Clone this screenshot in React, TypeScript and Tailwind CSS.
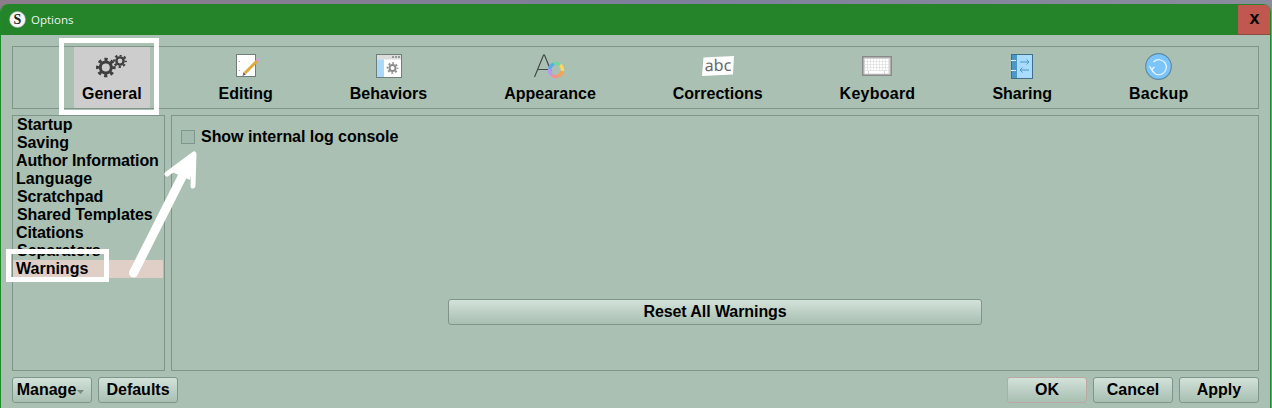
import React from "react";

const FONT = "[font-family:'Liberation_Sans',Arial,sans-serif]";

function Gear({ cx, cy, r, sw, tw, color }: { cx: number; cy: number; r: number; sw: number; tw: number; color: string }) {
  const outer = r + sw / 2 + 1;
  const c = 2 * Math.PI * outer;
  const dash = c / 8 / 2;
  return (
    <g fill="none" stroke={color}>
      <circle cx={cx} cy={cy} r={r} strokeWidth={sw} />
      <circle cx={cx} cy={cy} r={outer} strokeWidth={tw} strokeDasharray={`${dash} ${dash}`} strokeDashoffset={dash / 2} />
    </g>
  );
}

const GearsIcon = () => (
  <svg width="31" height="23" viewBox="0 0 31 23">
    <Gear cx={9.8} cy={12.5} r={5.5} sw={3} tw={3.6} color="#3f3f3f" />
    <Gear cx={24} cy={6} r={3.6} sw={2.4} tw={2.2} color="#3f3f3f" />
  </svg>
);

const EditingIcon = () => (
  <svg width="28" height="26" viewBox="0 0 28 26">
    <rect x="4.5" y="1.5" width="19" height="22" fill="#fff" stroke="#6f7f78" strokeWidth="1" />
    <rect x="7" y="8" width="1" height="1" fill="#aaa" />
    <rect x="7" y="17" width="1" height="1" fill="#aaa" />
    <line x1="13" y1="20" x2="25" y2="8" stroke="#e0a93a" strokeWidth="3" />
    <line x1="25" y1="8" x2="27" y2="6" stroke="#e39ad8" strokeWidth="3" />
    <path d="M10.5 23 L11.5 19 L14 21.5 Z" fill="#666" />
  </svg>
);

const BehaviorsIcon = () => (
  <svg width="26" height="24" viewBox="0 0 26 24">
    <rect x="0.5" y="0.5" width="25" height="23" fill="#fff" stroke="#6f7f78" />
    <rect x="1" y="1" width="24" height="4.5" fill="#dcdcdc" />
    <rect x="1" y="5.5" width="7" height="17.5" fill="#a9d8fb" />
    <rect x="16" y="2" width="2" height="2" fill="#999" />
    <rect x="19" y="2" width="2" height="2" fill="#999" />
    <rect x="22" y="2" width="2" height="2" fill="#999" />
    <Gear cx={16.5} cy={14} r={3} sw={2} tw={1.6} color="#8c8c8c" />
  </svg>
);

const ringColors = ["#6fd8a0", "#ffd75a", "#f6a24e", "#f58f8f", "#b49af5", "#5aa9f0"];
const ringArc = (i: number) => {
  const a0 = ((-110 + i * 60) * Math.PI) / 180;
  const a1 = ((-110 + (i + 1) * 60) * Math.PI) / 180;
  const p = (a: number) => `${22 + 6.5 * Math.cos(a)} ${16 + 6.5 * Math.sin(a)}`;
  return `M${p(a0)} A6.5 6.5 0 0 1 ${p(a1)}`;
};

const AppearanceIcon = () => (
  <svg width="32" height="24" viewBox="0 0 32 24">
    <path d="M0.5 23 L9.5 1 L10.5 1 L17 17" fill="none" stroke="#3f4a45" strokeWidth="1.2" />
    <line x1="4" y1="15.5" x2="15" y2="15.5" stroke="#3f4a45" strokeWidth="1.2" />
    <g fill="none" strokeWidth="3.2">
      {ringColors.map((c, i) => (
        <path key={c} d={ringArc(i)} stroke={c} />
      ))}
    </g>
  </svg>
);

const CorrectionsIcon = () => (
  <svg width="32" height="20" viewBox="0 0 32 20" className="overflow-visible">
    <polygon points="1.5,1.5 32,0 31,18.5 0,20" fill="#fff" />
    <text x="16" y="15" textAnchor="middle" fontSize="16" fill="#666" fontFamily="'Noto Sans',sans-serif" transform="rotate(-1 16 10)">abc</text>
  </svg>
);

const KeyboardIcon = () => (
  <svg width="30" height="20" viewBox="0 0 30 20">
    <rect x="0.75" y="0.75" width="28.5" height="18.5" fill="#d4d4d4" stroke="#8a8a8a" strokeWidth="1.5" />
    {[3, 6, 9, 12].map((y) =>
      [3, 6, 9, 12, 15, 18, 21, 24].map((x) => <rect key={`${x}-${y}`} x={x} y={y} width="2.5" height="2.5" fill="#fff" />)
    )}
    <rect x="7" y="15" width="15" height="2.5" fill="#fff" />
    <rect x="3" y="15" width="3" height="2.5" fill="#fff" />
    <rect x="23" y="15" width="3.5" height="2.5" fill="#fff" />
  </svg>
);

const SharingIcon = () => (
  <svg width="22" height="25" viewBox="0 0 22 25">
    <rect x="0.5" y="0.5" width="21" height="24" fill="#a9dcff" stroke="#3f6f8c" />
    <rect x="1" y="1" width="5" height="23" fill="#4b97c9" />
    <rect x="0" y="6" width="5" height="1" fill="#eef" />
    <rect x="0" y="16" width="5" height="1" fill="#eef" />
    <path d="M9 8 H18 M15.5 5.5 L18 8 L15.5 10.5" fill="none" stroke="#4b97c9" />
    <path d="M18 16 H9 M11.5 13.5 L9 16 L11.5 18.5" fill="none" stroke="#4b97c9" />
  </svg>
);

const BackupIcon = () => (
  <svg width="27" height="27" viewBox="0 0 27 27">
    <circle cx="13.5" cy="13.5" r="12.8" fill="#7cc5fb" stroke="#5d8aa5" strokeWidth="1.2" />
    <path d="M8.5 9 A7.5 7.5 0 1 1 6.6 16" fill="none" stroke="#eef8ff" strokeWidth="1.2" />
    <path d="M4.5 13 L6.6 16.5 L9.5 14" fill="none" stroke="#eef8ff" strokeWidth="1.2" />
  </svg>
);

const tabs = [
  { label: "General", icon: <GearsIcon />, active: true, cls: "" },
  { label: "Editing", icon: <EditingIcon />, cls: "" },
  { label: "Behaviors", icon: <BehaviorsIcon />, cls: "" },
  { label: "Appearance", icon: <AppearanceIcon />, cls: "" },
  { label: "Corrections", icon: <CorrectionsIcon />, cls: "" },
  { label: "Keyboard", icon: <KeyboardIcon />, cls: "tracking-[0.25px]" },
  { label: "Sharing", icon: <SharingIcon />, cls: "" },
  { label: "Backup", icon: <BackupIcon />, cls: "tracking-[0.3px]" },
];

const items = [
  { t: "Startup", c: "pl-[4px] tracking-[-0.1px]" },
  { t: "Saving", c: "pl-[4px] tracking-[-0.1px]" },
  { t: "Author Information", c: "pl-[3px] tracking-[-0.12px]" },
  { t: "Language", c: "pl-[3px] tracking-[0.1px]" },
  { t: "Scratchpad", c: "pl-[4px] tracking-[-0.1px]" },
  { t: "Shared Templates", c: "pl-[4px] tracking-[-0.06px]" },
  { t: "Citations", c: "pl-[3px] tracking-[-0.1px]" },
  { t: "Separators", c: "pl-[4px]" },
  { t: "Warnings", c: "pl-[3px] bg-[#dfcfc6]" },
];

function Btn({ children, className = "" }: { children: React.ReactNode; className?: string }) {
  return (
    <div className={`h-[26px] flex items-center justify-center rounded-[3px] border border-[#7f9589] bg-gradient-to-b from-[#d3e2d9] to-[#a8bfb2] text-[16px] font-bold text-black ${className}`}>
      {children}
    </div>
  );
}

export default function App() {
  return (
    <div className={`relative w-[1272px] h-[408px] overflow-hidden bg-gradient-to-r from-[#8d7d8c] via-[#7d7f9c] to-[#8a8d9c] ${FONT}`}>
      <div className="pt-[4px] h-full w-[1271px]">
        <div className="h-full flex flex-col rounded-t-[8px] overflow-hidden border-x border-x-[#1f8a2a] bg-[#a9c0b3]">
          {/* Title bar */}
          <div className="h-[31px] shrink-0 flex items-center bg-[#25832a] pl-[8px]">
            <svg width="17" height="17" viewBox="0 0 17 17" className="overflow-visible">
              <circle cx="8.5" cy="8.5" r="8" fill="#f6f6f6" stroke="#9aa" strokeWidth="0.6" />
              <text x="8.5" y="13.2" textAnchor="middle" fontSize="14" fontWeight="700" fontFamily="'Liberation Serif',serif" fill="#222">S</text>
            </svg>
            <span className="ml-[5px] text-[11.5px] text-[#f0f5f0] [font-family:'Open_Sans',sans-serif]">Options</span>
            <div className="ml-auto h-[30px] mt-[1px] w-[33px] flex items-center justify-center bg-[#c0584f] border-l border-b border-[#8a4a3f] text-[18px] font-bold leading-none text-black pb-[3px] pl-[1px]">
              x
            </div>
          </div>
          {/* Body */}
          <div className="flex-1 flex flex-col pl-[11px] pr-[11px] pt-[11px]">
            <div className="h-[63px] shrink-0 flex items-stretch gap-[77px] border border-[#7f9589] pl-[61px]">
              {tabs.map((t) => (
                <div key={t.label} className={`flex flex-col items-center pt-[3px] ${t.active ? "bg-[#cdcdcd] px-[8px] -mr-[8px]" : ""}`}>
                  <div className="h-[32px] flex items-center justify-center">{t.icon}</div>
                  <div className={`h-[24px] flex items-center text-[16px] font-bold text-black whitespace-nowrap ${t.cls}`}>{t.label}</div>
                </div>
              ))}
            </div>
            <div className="flex gap-[6px] mt-[6px] h-[256px]">
              <div className="w-[153px] shrink-0 border border-[#7f9589]">
                <div className="pr-[1px]">
                  {items.map((it) => (
                    <div key={it.t} className={`h-[18px] flex items-center text-[16px] font-bold text-black whitespace-nowrap ${it.c}`}>
                      {it.t}
                    </div>
                  ))}
                </div>
              </div>
              <div className="flex-1 flex flex-col border border-[#7f9589]">
                <div className="box-content h-[14px] flex items-center pl-[9px] pt-[14px]">
                  <div className="w-[14px] h-[14px] border border-[#7f9589] bg-[#a3bbae]" />
                  <span className="ml-[6px] -mt-[1px] text-[16px] font-bold text-black tracking-[-0.04px]">Show internal log console</span>
                </div>
                <Btn className="mt-auto mb-[45px] w-[534px] self-center tracking-[-0.08px]">Reset All Warnings</Btn>
              </div>
            </div>
            <div className="flex items-start gap-[6px] mt-[6px]">
              <Btn className="w-[80px] gap-[1px] pr-[3px]">
                Manage
                <svg width="7" height="4" viewBox="0 0 7 4" className="mt-[3px]"><path d="M0 0H7L3.5 4Z" fill="#7a8a80" /></svg>
              </Btn>
              <Btn className="w-[80px]">Defaults</Btn>
              <Btn className="w-[80px] ml-auto !border-[#b9a9a2]">OK</Btn>
              <Btn className="w-[80px]">Cancel</Btn>
              <Btn className="w-[80px]">Apply</Btn>
            </div>
          </div>
        </div>
      </div>
      {/* Annotations drawn over the screenshot */}
      <div className="absolute left-[59px] top-[38px] w-[100px] h-[77px] border-[5px] border-white" />
      <div className="absolute left-[6px] top-[249px] w-[103px] h-[33px] border-[5px] border-white" />
      <svg className="absolute left-0 top-0 pointer-events-none" width="1272" height="408">
        <line x1="133.5" y1="273" x2="189" y2="163" stroke="#fff" strokeWidth="9" strokeLinecap="round" />
        <path d="M167 174 L194 154 L193 186" fill="none" stroke="#fff" strokeWidth="5" strokeLinecap="round" strokeLinejoin="round" />
        <path d="M172 172 L195 155 L190 180 Z" fill="#fff" />
      </svg>
    </div>
  );
}
